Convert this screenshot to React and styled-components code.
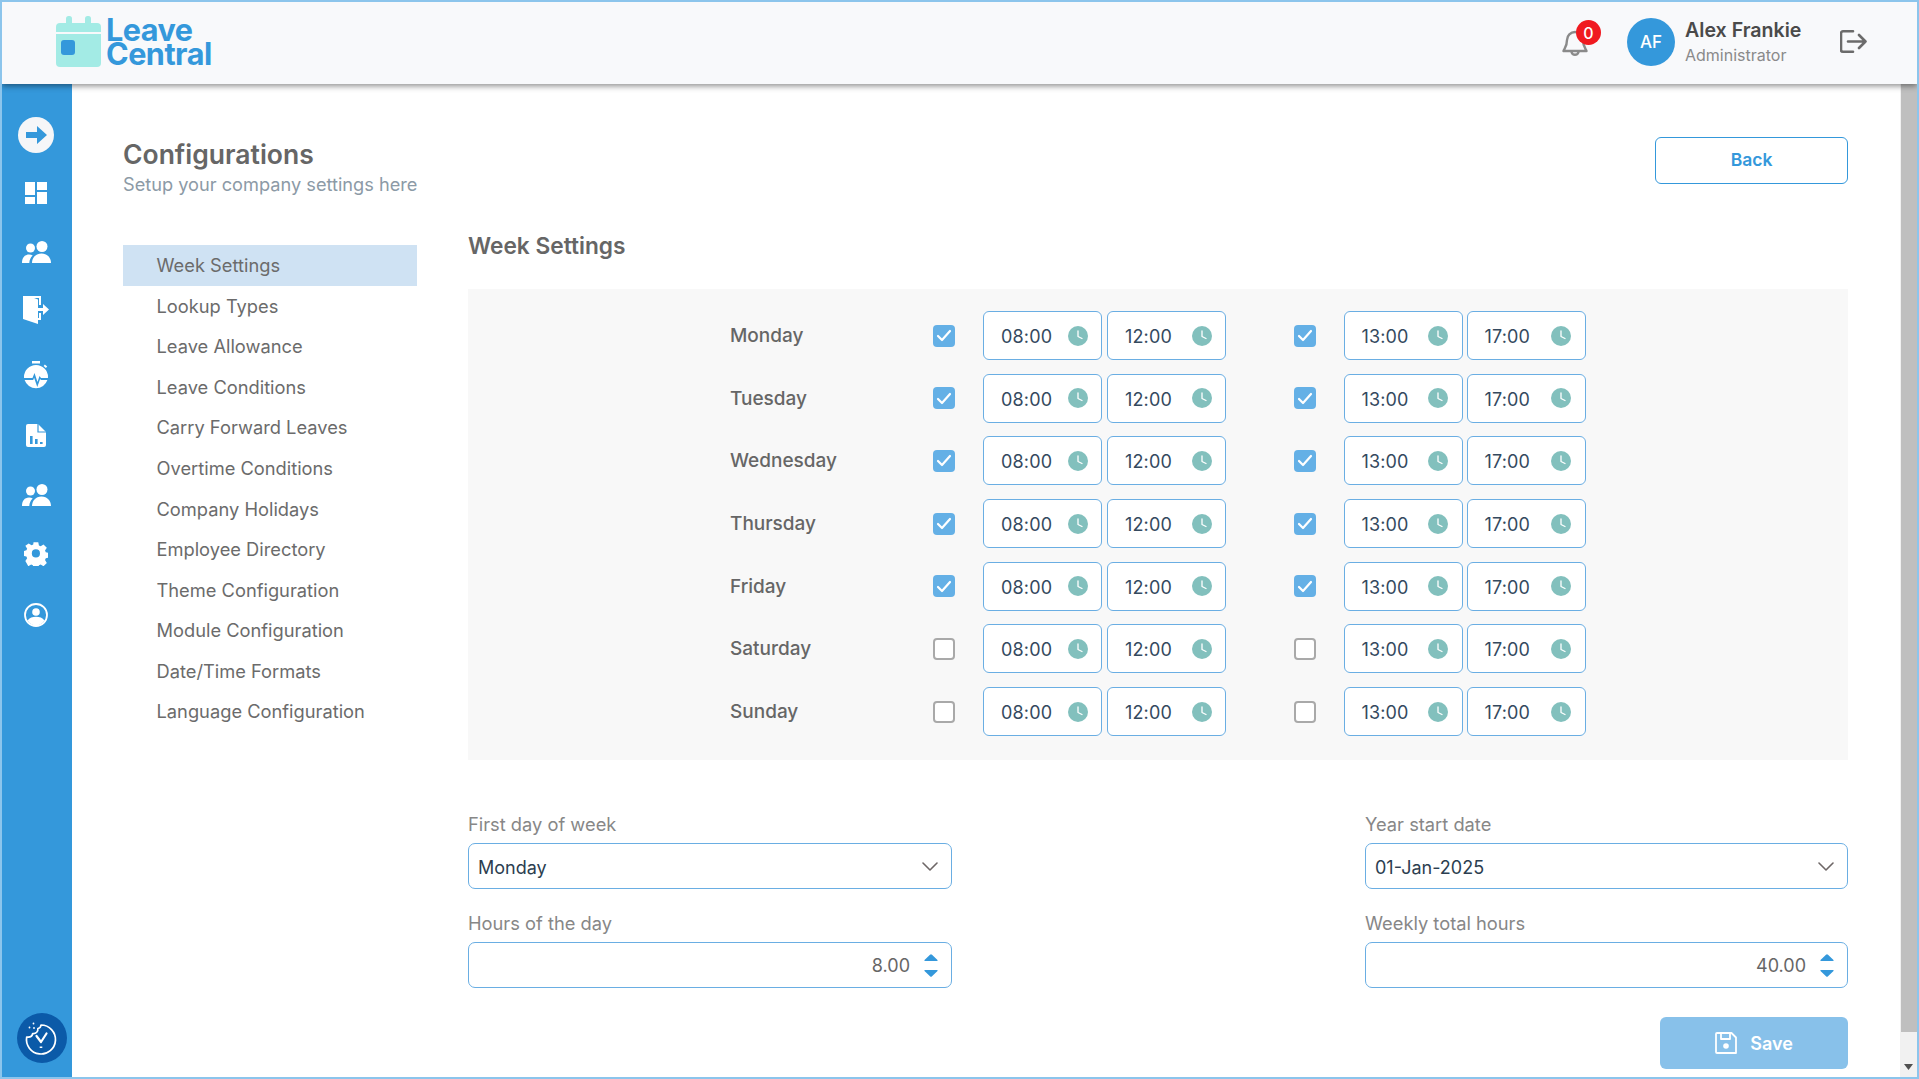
import React from "react";
import styled, { createGlobalStyle } from "styled-components";

const Global = createGlobalStyle`
  html, body { margin: 0; padding: 0; height: 100%; overflow: hidden; background: #fff; }
  body { font-family: Inter, "Liberation Sans", sans-serif; }
  * { box-sizing: border-box; }
`;

const Frame = styled.div`
  width: 1919px; height: 1079px; border: 2px solid #8cc5ec; display: flex; flex-direction: column; overflow: hidden; background: #fff;
`;
const Header = styled.header`
  height: 82px; flex: none; background: #f8f9fb; display: flex; align-items: center; justify-content: space-between;
  padding: 0 50px 0 54px; box-shadow: 0 2px 6px rgba(0,0,0,.45); position: relative; z-index: 2;
`;
const Logo = styled.div`display: flex; align-items: center; gap: 5px; margin-bottom: 3px;`;
const LogoText = styled.div`
  font-size: 30.6px; line-height: 24.5px; font-weight: 700; color: #3498db; letter-spacing: -.5px; padding-top: 1px;
`;
const HeaderRight = styled.div`display: flex; align-items: center;`;
const BellWrap = styled.div`position: relative; width: 30px; height: 34px; margin-right: 37px; display: flex; align-items: center; justify-content: center; margin-top: 2px;`;
const Badge = styled.span`
  position: absolute; left: 16px; top: -7px; width: 25px; height: 25px; border-radius: 50%; background: #f01a20; color: #fff;
  font-size: 16px; font-weight: 500; display: flex; align-items: center; justify-content: center;
`;
const Avatar = styled.div`
  width: 48px; height: 48px; border-radius: 50%; background: #3498db; color: #fff; font-size: 17px; font-weight: 500;
  display: flex; align-items: center; justify-content: center; margin: 0 10px 3px 0;
`;
const UserBox = styled.div`display: flex; flex-direction: column; width: 155px;`;
const UserName = styled.div`font-size: 19.6px; line-height: 24px; font-weight: 600; color: #4a4a4a; margin-top: -3px;`;
const UserRole = styled.div`font-size: 16px; line-height: 22px; color: #8a8a8a; margin-top: 2px;`;
const LogoutWrap = styled.div`display: flex; margin-bottom: 3px;`;

const Main = styled.div`flex: 1; display: flex; min-height: 0;`;
const Sidebar = styled.nav`
  width: 70px; flex: none; background: #3498db; display: flex; flex-direction: column; align-items: center; position: relative; padding: 33px 2px 0 0;
`;
const SideIcon = styled.div`
  width: 36px; height: 36px; display: flex; align-items: center; justify-content: center; margin-top: ${p => p.$mt || 0}px;
`;
const CookieBadge = styled.div`
  position: absolute; left: 15px; bottom: 14px; width: 50px; height: 50px; border-radius: 50%; background: #0b5aa8;
  display: flex; align-items: center; justify-content: center;
`;

const Content = styled.main`flex: 1; padding: 53px 52px 0 51px; min-width: 0;`;
const TitleRow = styled.div`display: flex; justify-content: space-between; align-items: flex-start; height: 86px;`;
const Title = styled.h1`margin: 0; font-size: 26.5px; line-height: 34px; font-weight: 600; color: #666;`;
const Subtitle = styled.div`font-size: 18.2px; line-height: 24px; margin-top: 1px; color: #8c9aa6;`;
const BackButton = styled.button`
  width: 193px; height: 47px; border: 1.5px solid #3498db; border-radius: 6px; background: #fff; color: #3498db;
  font: 600 17.5px Inter, sans-serif; padding-bottom: 3px;
`;
const Body = styled.div`display: flex; gap: 51px;`;
const SideMenu = styled.ul`list-style: none; margin: 0; padding: 22px 0 0; width: 294px; flex: none;`;
const MenuItem = styled.li`
  height: 40.55px; display: flex; align-items: center; padding-left: 33.5px; font-size: 18.3px; color: #6b6b6b;
  background: ${p => p.$active ? "#cfe2f3" : "transparent"};
`;
const Section = styled.section`flex: 1; min-width: 0;`;
const SectionTitle = styled.h2`margin: 0 0 20px; font-size: 22.7px; line-height: 46px; font-weight: 600; color: #666;`;
const Panel = styled.div`background: #f8f8f8; padding: 22px 0 24px 262px; display: flex; flex-direction: column; gap: 13.7px;`;
const DayRow = styled.div`display: flex; align-items: center; height: 49px;`;
const DayName = styled.div`width: 203px; font-size: 19px; font-weight: 500; color: #666;`;
const Check = styled.span`
  width: 22px; height: 22px; border-radius: 4px; margin-right: 28px; flex: none; display: flex; align-items: center; justify-content: center;
  background: ${p => p.$on ? "#64b0e6" : "#fff"}; border: ${p => p.$on ? "none" : "2px solid #a9a9a9"};
`;
const Pair = styled.div`display: flex; gap: ${p => p.$gap || 5}px; margin-right: ${p => p.$mr || 0}px;`;
const TimeBox = styled.div`
  width: 119px; height: 49px; border: 1.5px solid #6aaee3; border-radius: 6px; background: #fff; display: flex; align-items: center;
  justify-content: space-between; padding: 0 13.5px 0 17px; font-size: 18px; color: #34495e;
`;
const TimeText = styled.span`margin-top: 2px; letter-spacing: .15px;`;
const FormGrid = styled.div`display: grid; grid-template-columns: 484px 483px; justify-content: space-between; row-gap: 23px; margin-top: 53px;`;
const Field = styled.div`display: flex; flex-direction: column;`;
const FieldLabel = styled.label`font-size: 18.3px; line-height: 22px; color: #878787; margin-bottom: 8px;`;
const InputBox = styled.div`
  height: 46px; border: 1.5px solid #6aaee3; border-radius: 7px; background: #fff; display: flex; align-items: center;
  justify-content: ${p => p.$num ? "flex-end" : "space-between"}; padding: ${p => p.$num ? "0 13px 0 0" : "0 13px 0 9px"};
  font-size: 18px; color: ${p => p.$num ? "#666" : "#2c3e50"};
`;
const ValueText = styled.span`margin-top: 2px;`;
const Spinner = styled.span`display: flex; flex-direction: column; gap: 9px; margin-left: 14px; margin-top: 1px;`;
const Actions = styled.div`display: flex; justify-content: flex-end; margin-top: 29px;`;
const SaveButton = styled.button`
  width: 188px; height: 52px; border: none; border-radius: 6px; background: #88c1ea; color: #fff; font: 600 18px Inter, sans-serif;
  display: flex; align-items: center; justify-content: center; gap: 13px;
`;
const Scrollbar = styled.div`width: 17px; flex: none; background: #f1f1f1; display: flex; flex-direction: column;`;
const Thumb = styled.div`height: 948px; background: #bfbfbf; margin-left: 1px;`;
const ArrowSlot = styled.div`margin-top: auto; height: 20px; display: flex; align-items: center; justify-content: center;`;

const CalendarLogo = () => (
  <svg width="45" height="51" viewBox="0 0 45 51">
    <rect x="10" y="0" width="6" height="12" rx="2.5" fill="#a3ebe5" />
    <rect x="29" y="0" width="6" height="12" rx="2.5" fill="#a3ebe5" />
    <path d="M4 7h37a4 4 0 0 1 4 4v5H0v-5a4 4 0 0 1 4-4z" fill="#a3ebe5" />
    <path d="M0 18h45v29a4 4 0 0 1-4 4H4a4 4 0 0 1-4-4z" fill="#a3ebe5" />
    <rect x="5" y="24" width="14" height="15" rx="3" fill="#3498db" />
  </svg>
);
const Bell = () => (
  <svg width="26" height="30" viewBox="0 0 26 30" fill="none" stroke="#8a8a8a" strokeWidth="2.4" strokeLinecap="round" strokeLinejoin="round">
    <path d="M13 3a8 8 0 0 0-8 8c0 7-3 9-3.5 11h23C24 20 21 18 21 11a8 8 0 0 0-8-8z" />
    <path d="M9.5 23a3.6 3.6 0 0 0 7 0" />
  </svg>
);
const Logout = () => (
  <svg width="27" height="23" viewBox="0 0 27 23" fill="none" stroke="#6b6b6b" strokeWidth="2.6" strokeLinecap="round" strokeLinejoin="round">
    <path d="M13 1.300H3a2 2 0 0 0-2 2v16.400a2 2 0 0 0 2 2h10" />
    <path d="M8 11.500h17.500M19 5l6.500 6.500L19 18" />
  </svg>
);
const ArrowCircle = () => (
  <svg width="36" height="36" viewBox="0 0 36 36">
    <circle cx="18" cy="18" r="18" fill="#f5f6f8" />
    <path d="M8 15h11V9l10 9-10 9v-6H8z" fill="#3498db" />
  </svg>
);
const Dash = () => (
  <svg width="22" height="22" viewBox="0 0 22 22" fill="#fff">
    <rect x="0" y="0" width="10" height="13" /><rect x="12" y="0" width="10" height="8" />
    <rect x="0" y="15" width="10" height="7" /><rect x="12" y="10" width="10" height="12" />
  </svg>
);
const Group = () => (
  <svg width="29" height="22" viewBox="0 0 29 22" fill="#fff">
    <circle cx="8.5" cy="7" r="4.5" /><circle cx="20" cy="5.5" r="5.5" />
    <path d="M0 22c0-5 2.500-8.500 7-8.500 1.500 0 2.700.3 3.700 1C8.500 16.500 7.500 19 7.300 22z" />
    <path d="M10 22c0-5 3.500-9.500 9.500-9.500S29 17 29 22z" />
  </svg>
);
const Door = () => (
  <svg width="26" height="28" viewBox="0 0 26 28" fill="#fff">
    <path d="M0 0h6l9 3.500V28L0 23z" />
    <path d="M2 0h16v9h-2V2H5z" /><path d="M16 17h2v7h-6v-2h4z" />
    <path d="M14 12h6V8l6 5.500L20 19v-4h-6z" />
  </svg>
);
const Stopwatch = () => (
  <svg width="24" height="28" viewBox="0 0 24 28" fill="#fff">
    <rect x="8" y="0" width="8" height="2.500" />
    <path d="M12 4a12 12 0 0 1 12 12c0 .3 0 .7-.1 1H17l-1.500-2-2 6-3-9-2 5H.1C0 16.700 0 16.300 0 16A12 12 0 0 1 12 4z" />
    <path d="M.6 19h8.600l.9-2.300 3.200 9.300 2.800-8 .9 1H23.400A12 12 0 0 1 .6 19z" />
    <rect x="20" y="4" width="3" height="2" transform="rotate(40 21 5)" />
  </svg>
);
const Report = () => (
  <svg width="20" height="23" viewBox="0 0 20 23">
    <path d="M2 0h10l8 8v13a2 2 0 0 1-2 2H2a2 2 0 0 1-2-2V2a2 2 0 0 1 2-2z" fill="#fff" />
    <path d="M12 0v8h8" fill="none" stroke="#3498db" strokeWidth="1.200" />
    <rect x="4" y="12" width="2.600" height="8" fill="#3498db" />
    <rect x="9" y="15" width="2.600" height="5" fill="#3498db" />
    <rect x="14" y="18" width="2.600" height="2" fill="#3498db" />
  </svg>
);
const Gear = () => (
  <svg width="24" height="24" viewBox="0 0 24 24">
    <path fill="#fff" fillRule="evenodd" d="M9.500 0h5l.7 3.400 1.800.8 3-1.900 3.500 3.500-1.900 3 .8 1.800 3.100.7v5l-3.100.7-.8 1.800 1.900 3-3.500 3.500-3-1.900-1.800.8-.7 3.300h-5l-.7-3.300-1.800-.8-3 1.900L.9 19.800l1.900-3-.8-1.800L-1 14.300v-5l3-.7.800-1.800-1.900-3L4.400 1.300l3 1.900 1.800-.8zM12 7.500a4.300 4.300 0 1 0 0 8.600 4.300 4.300 0 0 0 0-8.600z" transform="translate(.5 .2) scale(.95)" />
  </svg>
);
const UserCircle = () => (
  <svg width="24" height="24" viewBox="0 0 24 24">
    <circle cx="12" cy="12" r="11" fill="none" stroke="#fff" strokeWidth="1.800" />
    <circle cx="12" cy="9" r="3.800" fill="#fff" />
    <path d="M3.500 17.500c2-2.800 5-3.700 8.500-3.700s6.500.9 8.500 3.700A11 11 0 0 1 12 22.500a11 11 0 0 1-8.500-5z" fill="#fff" />
  </svg>
);
const Cookie = () => (
  <svg width="36" height="36" viewBox="0 0 36 36" fill="none" stroke="#fff" strokeWidth="1.700" strokeLinecap="round" strokeLinejoin="round">
    <path d="M17 5a14.500 14.500 0 1 1-14.300 12c3 .5 5.500-.8 6-3.500 3.500.3 5.500-2 5.200-5 1.800-.2 2.900-1.700 3.100-3.500z" />
    <path d="M12.500 16l4.500 6 5.500-8.500" strokeWidth="2.200" />
    <path d="M17 26.500v1.500" strokeWidth="2.600" strokeLinecap="butt" />
    <circle cx="9.500" cy="3.500" r=".9" fill="#fff" stroke="none" />
    <circle cx="5.500" cy="7.500" r=".9" fill="#fff" stroke="none" />
    <circle cx="10" cy="8" r=".9" fill="#fff" stroke="none" />
  </svg>
);
const Clock = ({ size = 20 }) => (
  <svg width={size} height={size} viewBox="0 0 20 20">
    <circle cx="10" cy="10" r="10" fill="#82c0bd" />
    <path d="M10 5v5.500l4 2" fill="none" stroke="#fff" strokeWidth="1.300" strokeLinecap="round" strokeLinejoin="round" />
  </svg>
);
const Tick = () => (
  <svg width="16" height="13" viewBox="0 0 16 13" fill="none" stroke="#fff" strokeWidth="2.200" strokeLinecap="round" strokeLinejoin="round">
    <path d="M2 7l4 4 8-9" />
  </svg>
);
const Chevron = () => (
  <svg width="16" height="9" viewBox="0 0 16 9" fill="none" stroke="#6e6767" strokeWidth="1.600" strokeLinecap="round" strokeLinejoin="round">
    <path d="M1 1l7 7 7-7" />
  </svg>
);
const Tri = ({ down }) => (
  <svg width="14" height="7" viewBox="0 0 14 8" preserveAspectRatio="none" style={down ? { transform: "scaleY(-1)" } : undefined}>
    <path d="M6 .8a1.300 1.300 0 0 1 2 0l5.500 6a.7.7 0 0 1-.5 1.200H1a.7.7 0 0 1-.5-1.200z" fill="#3498db" />
  </svg>
);
const Floppy = () => (
  <svg width="22" height="22" viewBox="0 0 22 22" fill="none" stroke="#fff" strokeWidth="1.800" strokeLinejoin="round">
    <path d="M2 1h14.500L21 5.500V21H2a1 1 0 0 1-1-1V2a1 1 0 0 1 1-1z" />
    <path d="M6 1v6h9V1" />
    <circle cx="11" cy="14" r="2.800" fill="#fff" stroke="none" />
  </svg>
);

const days = [
  ["Monday", true], ["Tuesday", true], ["Wednesday", true], ["Thursday", true], ["Friday", true], ["Saturday", false], ["Sunday", false],
];
const menu = ["Week Settings", "Lookup Types", "Leave Allowance", "Leave Conditions", "Carry Forward Leaves", "Overtime Conditions", "Company Holidays", "Employee Directory", "Theme Configuration", "Module Configuration", "Date/Time Formats", "Language Configuration"];
const sideIcons = [
  [ArrowCircle, 0], [Dash, 22], [Group, 23], [Door, 22], [Stopwatch, 29], [Report, 24], [Group, 24], [Gear, 23], [UserCircle, 25],
];

const Time = ({ v }) => <TimeBox><TimeText>{v}</TimeText><Clock /></TimeBox>;

export default function App() {
  return (
    <Frame>
      <Global />
      <Header>
        <Logo>
          <CalendarLogo />
          <LogoText>Leave<br />Central</LogoText>
        </Logo>
        <HeaderRight>
          <BellWrap><Bell /><Badge>0</Badge></BellWrap>
          <Avatar>AF</Avatar>
          <UserBox>
            <UserName>Alex Frankie</UserName>
            <UserRole>Administrator</UserRole>
          </UserBox>
          <LogoutWrap><Logout /></LogoutWrap>
        </HeaderRight>
      </Header>
      <Main>
        <Sidebar>
          {sideIcons.map(([I, mt], i) => <SideIcon key={i} $mt={mt}><I /></SideIcon>)}
          <CookieBadge><Cookie /></CookieBadge>
        </Sidebar>
        <Content>
          <TitleRow>
            <div>
              <Title>Configurations</Title>
              <Subtitle>Setup your company settings here</Subtitle>
            </div>
            <BackButton>Back</BackButton>
          </TitleRow>
          <Body>
            <SideMenu>
              {menu.map((m, i) => <MenuItem key={m} $active={i === 0}>{m}</MenuItem>)}
            </SideMenu>
            <Section>
              <SectionTitle>Week Settings</SectionTitle>
              <Panel>
                {days.map(([d, on]) => (
                  <DayRow key={d}>
                    <DayName>{d}</DayName>
                    <Check $on={on}>{on && <Tick />}</Check>
                    <Pair $mr={67.5}><Time v="08:00" /><Time v="12:00" /></Pair>
                    <Check $on={on}>{on && <Tick />}</Check>
                    <Pair $gap={4}><Time v="13:00" /><Time v="17:00" /></Pair>
                  </DayRow>
                ))}
              </Panel>
              <FormGrid>
                <Field><FieldLabel>First day of week</FieldLabel><InputBox><ValueText>Monday</ValueText><Chevron /></InputBox></Field>
                <Field><FieldLabel>Year start date</FieldLabel><InputBox><ValueText>01-Jan-2025</ValueText><Chevron /></InputBox></Field>
                <Field><FieldLabel>Hours of the day</FieldLabel><InputBox $num>8.00<Spinner><Tri /><Tri down /></Spinner></InputBox></Field>
                <Field><FieldLabel>Weekly total hours</FieldLabel><InputBox $num>40.00<Spinner><Tri /><Tri down /></Spinner></InputBox></Field>
              </FormGrid>
              <Actions><SaveButton><Floppy />Save</SaveButton></Actions>
            </Section>
          </Body>
        </Content>
        <Scrollbar>
          <Thumb />
          <ArrowSlot>
            <svg width="9" height="6" viewBox="0 0 9 6"><path d="M0 0h9L4.500 6z" fill="#505050" /></svg>
          </ArrowSlot>
        </Scrollbar>
      </Main>
    </Frame>
  );
}
